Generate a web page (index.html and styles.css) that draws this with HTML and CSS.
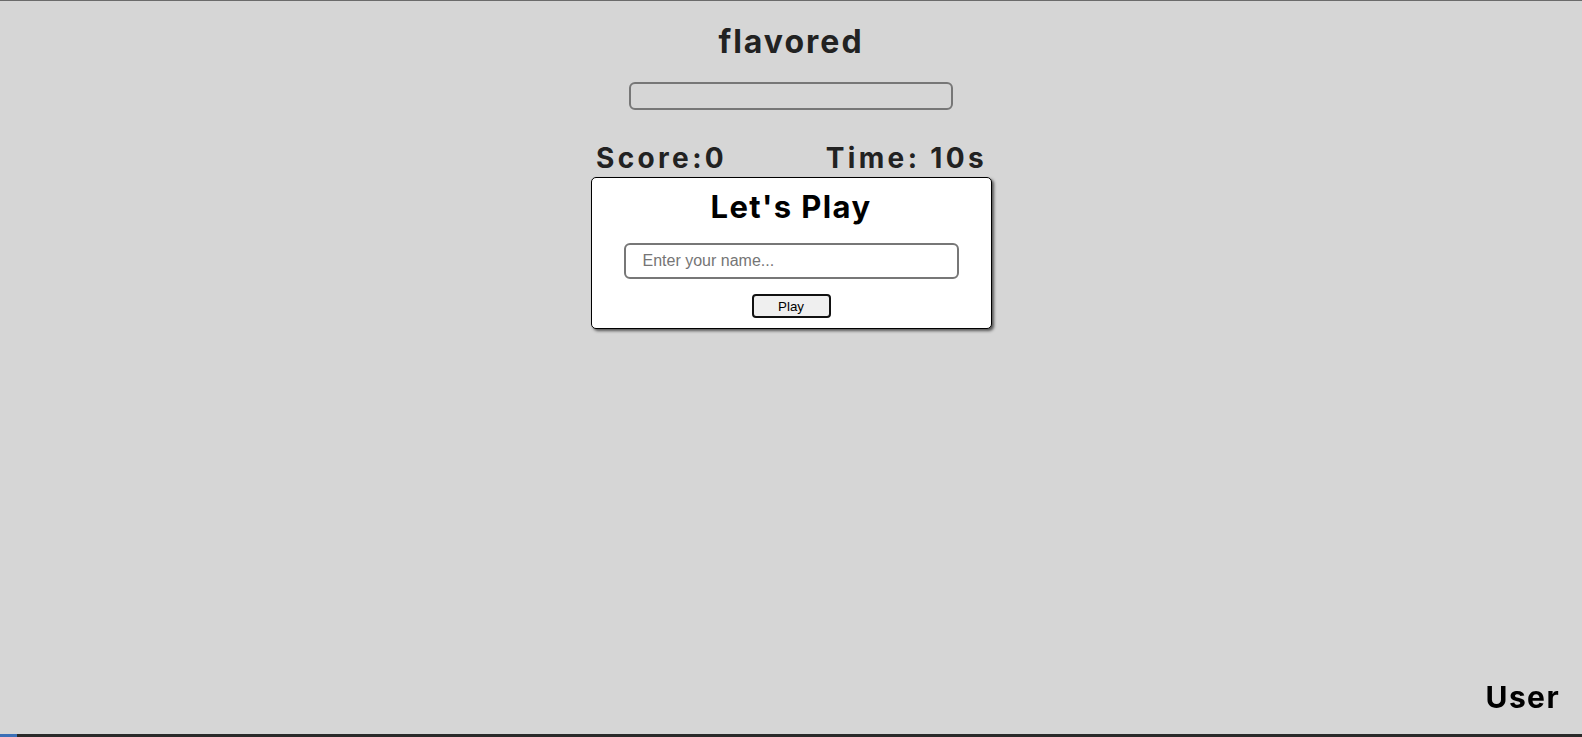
FILE: index.html
```html
<!DOCTYPE html>
<html lang="en">
<head>
<meta charset="utf-8">
<title>flavored</title>
<link rel="stylesheet" href="styles.css">
</head>
<body>
<div class="page">
  <h1 class="title">flavored</h1>
  <div class="progress"></div>
  <div class="stats">
    <span class="stat">Score:0</span>
    <span class="stat">Time: 10s</span>
  </div>
  <div class="card">
    <h2 class="card-title">Let's Play</h2>
    <input class="name-input" type="text" placeholder="Enter your name...">
    <button class="play-btn" type="button">Play</button>
  </div>
</div>
<div class="user">User</div>
<div class="taskbar"><span class="taskbar-start"></span></div>
</body>
</html>
```
FILE: styles.css
```css
html, body {
  margin: 0;
  padding: 0;
  height: 100%;
}
body {
  background: #d6d6d6;
  font-family: "Inter", "Liberation Sans", sans-serif;
  border-top: 1px solid #6b6b6b;
  box-sizing: border-box;
  overflow: hidden;
}
.page {
  display: flex;
  flex-direction: column;
  align-items: center;
}
.title {
  margin: 22px 0 0;
  font-size: 32px;
  font-weight: 750;
  letter-spacing: 2px;
  color: #222;
  line-height: 38.75px;
}
.progress {
  margin-top: 20px;
  width: 324px;
  height: 28px;
  box-sizing: border-box;
  border: 2px solid #777;
  border-radius: 6px;
}
.stats {
  margin-top: 31px;
  width: 400px;
  box-sizing: border-box;
  padding: 0 4px 0 5px;
  display: flex;
  justify-content: space-between;
}
.stat {
  font-size: 28px;
  font-weight: 750;
  letter-spacing: 3.35px;
  color: #222;
  line-height: 34px;
}
.card {
  margin-top: 2px;
  width: 401px;
  height: 152px;
  box-sizing: border-box;
  background: #fff;
  border: 1px solid #000;
  border-radius: 5px;
  box-shadow: 2px 2px 3px #555;
  display: flex;
  flex-direction: column;
  align-items: center;
}
.card-title {
  margin: 10px 0 0;
  font-size: 31px;
  font-weight: 700;
  letter-spacing: 1.4px;
  color: #000;
  line-height: 37.5px;
}
.name-input {
  margin-top: 18px;
  width: 335px;
  height: 36px;
  box-sizing: border-box;
  border: 2px solid #777;
  border-radius: 6px;
  padding: 0 0 0 17px;
  font-family: "Liberation Sans", Arial, sans-serif;
  font-size: 16px;
  background: #fff;
  outline: none;
}
.name-input::placeholder {
  color: #757575;
}
.play-btn {
  margin-top: 15px;
  width: 79px;
  height: 24px;
  box-sizing: border-box;
  border: 2px solid #111;
  border-radius: 4px;
  background: #efefef;
  font-family: "Liberation Sans", Arial, sans-serif;
  font-size: 13.33px;
  color: #000;
  padding: 0;
}
.user {
  position: fixed;
  right: 22px;
  bottom: 22px;
  font-size: 30px;
  font-weight: 750;
  letter-spacing: 1.4px;
  color: #000;
  line-height: 36px;
}
.taskbar {
  position: fixed;
  left: 0;
  right: 0;
  bottom: 0;
  height: 3px;
  background: #2a2a2a;
}
.taskbar-start {
  display: block;
  width: 17px;
  height: 3px;
  background: #3b6fb6;
}
```
